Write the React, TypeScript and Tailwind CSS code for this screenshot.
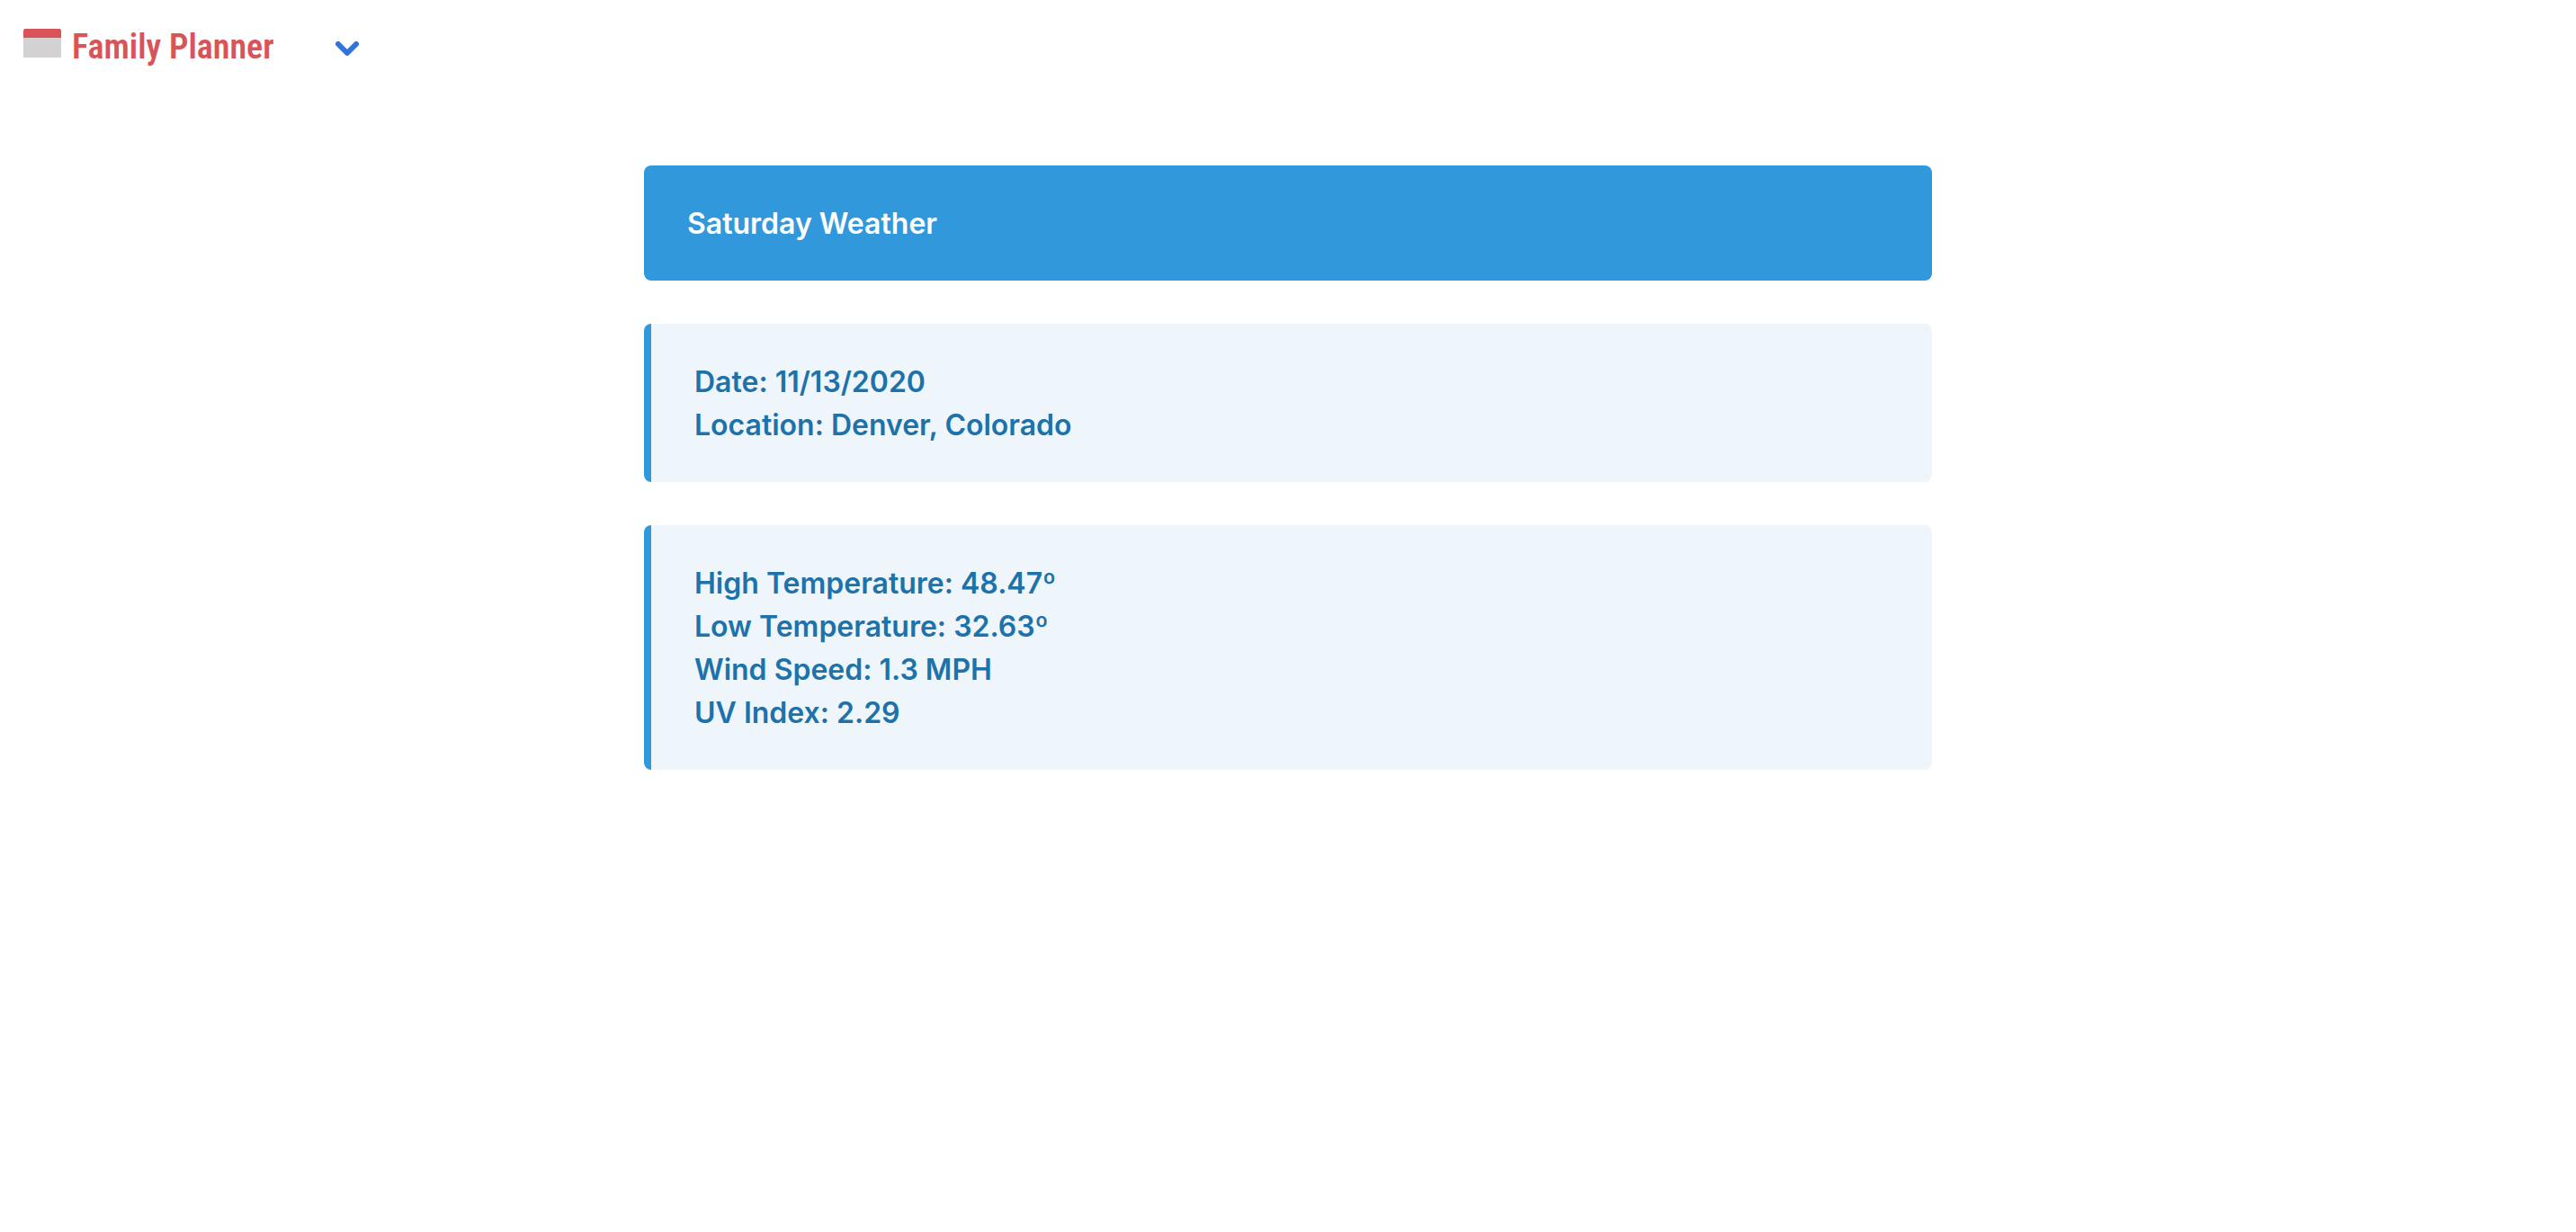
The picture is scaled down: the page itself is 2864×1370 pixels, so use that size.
import type { ReactNode } from "react";

const forecast = {
  day: "Saturday",
  details: ["Date: 11/13/2020", "Location: Denver, Colorado"],
  conditions: [
    "High Temperature: 48.47º",
    "Low Temperature: 32.63º",
    "Wind Speed: 1.3 MPH",
    "UV Index: 2.29",
  ],
};

function CalendarIcon() {
  return (
    <svg className="h-8 w-[42px] shrink-0" viewBox="0 0 42 32" aria-hidden="true">
      <path d="M0 9h42v23H0z" fill="#d3d1d2" />
      <path d="M0 10V2q0-2 2-2h38q2 0 2 2v8z" fill="#d95459" />
    </svg>
  );
}

function Navbar() {
  return (
    <nav className="flex h-[104px] items-start gap-[68px] px-[26px] pt-5" aria-label="Main">
      <a
        href="#"
        className="flex items-start gap-3 font-['Roboto_Condensed','Roboto',sans-serif] text-[38px] leading-[64px] font-semibold text-[#d95459]"
      >
        <span className="pt-3">
          <CalendarIcon />
        </span>
        Family Planner
      </a>
      <button type="button" aria-haspopup="menu" aria-label="Open menu" className="flex h-[70px] items-center">
        <svg className="h-[18px] w-[26px]" viewBox="0 0 26 18" fill="none" aria-hidden="true">
          <path
            d="M3 3l10 10L23 3"
            stroke="#3273dc"
            strokeWidth="6"
            strokeLinecap="round"
            strokeLinejoin="round"
          />
        </svg>
      </button>
    </nav>
  );
}

function Message({ children }: { children: ReactNode }) {
  return (
    <section className="rounded-lg border-l-8 border-[#3298dc] bg-[#eef6fc] px-12 pt-[41px] pb-[39px] text-[#1d72aa]">
      {children}
    </section>
  );
}

export default function App() {
  return (
    <div className="min-h-screen bg-white font-['Inter',sans-serif] text-[32px] leading-[48px] font-semibold">
      <Navbar />
      <main className="mx-auto mt-20 flex w-1/2 flex-col gap-12">
        <h1 className="rounded-lg bg-[#3298dc] px-12 pt-[41px] pb-[39px] text-white">{forecast.day} Weather</h1>
        <Message>
          {forecast.details.map((line) => (
            <p key={line}>{line}</p>
          ))}
        </Message>
        <Message>
          {forecast.conditions.map((line) => (
            <p key={line}>{line}</p>
          ))}
        </Message>
      </main>
    </div>
  );
}
